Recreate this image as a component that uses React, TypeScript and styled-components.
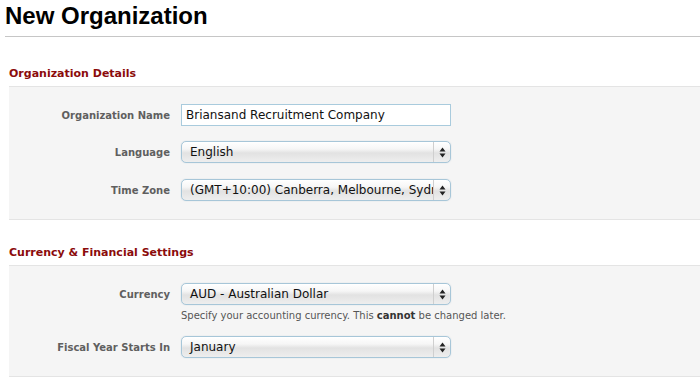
import React from "react";
import styled, { createGlobalStyle } from "styled-components";

const GlobalStyle = createGlobalStyle`
  body {
    margin: 0;
    background: #ffffff;
    font-family: "DejaVu Sans", "Liberation Sans", sans-serif;
  }
`;

const Page = styled.div`
  width: 700px;
  overflow: hidden;
`;

const PageTitle = styled.h1`
  margin: 0;
  padding: 2px 0 0 5px;
  height: 33px;
  box-sizing: border-box;
  font-family: "Liberation Sans", Arial, sans-serif;
  font-size: 24px;
  font-weight: bold;
  color: #000;
`;

const Rule = styled.div`
  margin-left: 5px;
  height: 1px;
  margin-top: 3px;
  background: #c6c6c6;
`;

const Section = styled.section`
  margin-left: 9px;
`;

const SectionTitle = styled.h2<{ $top: number }>`
  margin: ${({ $top }) => $top}px 0 0 0;
  height: 19px;
  font-size: 11px;
  font-weight: bold;
  color: #8b0b0b;
  line-height: 14px;
`;

const Panel = styled.div`
  background: #f5f5f5;
  border-top: 1px solid #e4e4e4;
  border-bottom: 1px solid #e4e4e4;
  padding: 17px 0 18px 0;
  display: flex;
  flex-direction: column;
`;

const Row = styled.div<{ $gap: number }>`
  display: grid;
  grid-template-columns: 161px 270px;
  column-gap: 11px;
  align-items: center;
  margin-top: ${({ $gap }) => $gap}px;
`;

const Label = styled.label`
  text-align: right;
  font-size: 10px;
  font-weight: bold;
  color: #5f5f5f;
`;

const TextInput = styled.div`
  height: 22px;
  box-sizing: border-box;
  border: 1px solid #a9cbdd;
  background: #fff;
  font-size: 12px;
  color: #111;
  padding: 0 4px;
  line-height: 20px;
  white-space: nowrap;
  overflow: hidden;
`;

const SelectBox = styled.div`
  height: 22px;
  box-sizing: border-box;
  border: 1px solid #a7c6d8;
  border-radius: 5px;
  background: linear-gradient(#ffffff 0%, #f6f6f6 35%, #e2e2e2 55%, #eeeeee 100%);
  box-shadow: inset 0 1px 1px rgba(255, 255, 255, 0.9), 0 0 1px rgba(120, 160, 190, 0.5);
  display: flex;
  align-items: center;
  overflow: hidden;
`;

const SelectText = styled.span`
  flex: 1;
  min-width: 0;
  padding-left: 8px;
  font-size: 12px;
  color: #111;
  white-space: nowrap;
  overflow: hidden;
`;

const SelectArrows = styled.span`
  width: 16px;
  height: 100%;
  border-left: 1px solid #cfcfcf;
  display: flex;
  align-items: center;
  justify-content: center;
`;

const Help = styled.div`
  grid-column: 2 / span 1;
  font-size: 10px;
  color: #555;
  margin-top: 5px;
  white-space: nowrap;

  b {
    color: #333;
  }
`;

const Arrows = () => (
  <svg width="7" height="11" viewBox="0 0 7 11">
    <path d="M3.5 0.5 L6.5 4.5 L0.5 4.5 Z" fill="#222" />
    <path d="M3.5 10.5 L6.5 6.5 L0.5 6.5 Z" fill="#222" />
  </svg>
);

const Select = ({ value }: { value: string }) => (
  <SelectBox>
    <SelectText>{value}</SelectText>
    <SelectArrows>
      <Arrows />
    </SelectArrows>
  </SelectBox>
);

const App = () => {
  return (
    <Page>
      <GlobalStyle />
      <PageTitle>New Organization</PageTitle>
      <Rule />
      <Section>
        <SectionTitle $top={30}>Organization Details</SectionTitle>
        <Panel>
          <Row $gap={0}>
            <Label>Organization Name</Label>
            <TextInput>Briansand Recruitment Company</TextInput>
          </Row>
          <Row $gap={15}>
            <Label>Language</Label>
            <Select value="English" />
          </Row>
          <Row $gap={16}>
            <Label>Time Zone</Label>
            <Select value="(GMT+10:00) Canberra, Melbourne, Sydney" />
          </Row>
        </Panel>
      </Section>
      <Section>
        <SectionTitle $top={26}>Currency &amp; Financial Settings</SectionTitle>
        <Panel>
          <Row $gap={0}>
            <Label>Currency</Label>
            <Select value="AUD - Australian Dollar" />
            <Help>
              Specify your accounting currency. This <b>cannot</b> be changed later.
            </Help>
          </Row>
          <Row $gap={15}>
            <Label>Fiscal Year Starts In</Label>
            <Select value="January" />
          </Row>
        </Panel>
      </Section>
    </Page>
  );
};

export default App;
